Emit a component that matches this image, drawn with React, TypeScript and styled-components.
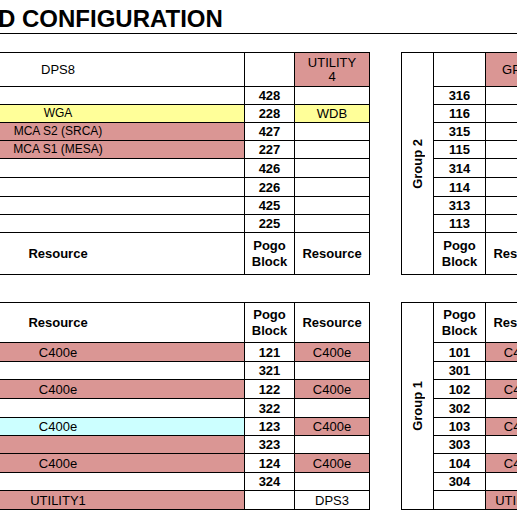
import React from "react";
import styled, { createGlobalStyle } from "styled-components";

type Fill = "pink" | "yellow" | "cyan";
const fills: Record<Fill, string> = {
  pink: "#da9694",
  yellow: "#ffff99",
  cyan: "#ccffff",
};

const Global = createGlobalStyle`
  html, body { margin: 0; padding: 0; background: #fff; overflow: hidden; }
  body { font-family: "Liberation Sans", Arial, sans-serif; color: #000; }
`;

const Page = styled.div`
  width: 517px;
  height: 517px;
  overflow: hidden;
`;

const Title = styled.h1`
  margin: 0;
  height: 34px;
  box-sizing: border-box;
  padding-top: 5px;
  font-size: 24px;
  line-height: 28px;
  font-weight: 700;
  border-bottom: 1px solid #000;
  white-space: nowrap;
  text-indent: -2px;
`;

const Board = styled.div`
  display: grid;
  grid-template-columns: 370px 370px;
  column-gap: 31px;
  row-gap: 27px;
  margin-top: 18px;
  width: max-content;
`;

const Sheet = styled.div<{ $cols: string; $rows: string; $edge?: boolean }>`
  display: grid;
  grid-template-columns: ${(p) => p.$cols};
  grid-template-rows: ${(p) => p.$rows};
  border-top: 1px solid #000;
  border-left: ${(p) => (p.$edge ? "1px solid #000" : "none")};
  width: max-content;
`;

const Cell = styled.div<{
  $fill?: Fill;
  $bold?: boolean;
  $small?: boolean;
  $wide?: boolean;
}>`
  box-sizing: border-box;
  border-right: 1px solid #000;
  border-bottom: 1px solid #000;
  background: ${(p) => (p.$fill ? fills[p.$fill] : "#fff")};
  display: flex;
  align-items: center;
  justify-content: center;
  text-align: center;
  font-size: ${(p) => (p.$small ? 12 : 13)}px;
  font-weight: ${(p) => (p.$bold ? 700 : 400)};
  line-height: 15px;
  white-space: nowrap;
  padding-right: ${(p) => (p.$wide ? 128 : 0)}px;
  overflow: hidden;
`;

const Stack = styled.span<{ $lh: number }>`
  display: block;
  line-height: ${(p) => p.$lh}px;
`;

const GroupCell = styled.div`
  grid-row: 1 / -1;
  box-sizing: border-box;
  border-right: 1px solid #000;
  border-bottom: 1px solid #000;
  display: flex;
  align-items: center;
  justify-content: center;
`;

const GroupText = styled.span`
  writing-mode: vertical-rl;
  transform: rotate(180deg);
  font-size: 13px;
  font-weight: 700;
  white-space: nowrap;
`;

type Res = { text?: string; fill?: Fill; small?: boolean };
type Row = { left?: Res; pogo?: string; right?: Res };

const TOP_ROWS = "34px 18px 18px 18px 18px 19px 19px 18px 18px 42px";
const BOTTOM_ROWS = "40px 19px 18px 19px 19px 18px 18px 19px 18px 19px";
const LEFT_COLS = "245px 50px 75px";
const RIGHT_COLS = "32px 52px 75px";

const topLeft: Row[] = [
  { pogo: "428" },
  { left: { text: "WGA", fill: "yellow", small: true }, pogo: "228", right: { text: "WDB", fill: "yellow" } },
  { left: { text: "MCA S2 (SRCA)", fill: "pink", small: true }, pogo: "427" },
  { left: { text: "MCA S1 (MESA)", fill: "pink", small: true }, pogo: "227" },
  { pogo: "426" },
  { pogo: "226" },
  { pogo: "425" },
  { pogo: "225" },
];

const c400: Res = { text: "C400e", fill: "pink" };

const bottomLeft: Row[] = [
  { left: c400, pogo: "121", right: c400 },
  { pogo: "321" },
  { left: c400, pogo: "122", right: c400 },
  { pogo: "322" },
  { left: { text: "C400e", fill: "cyan" }, pogo: "123", right: c400 },
  { left: { fill: "pink" }, pogo: "323" },
  { left: c400, pogo: "124", right: c400 },
  { pogo: "324" },
  { left: { text: "UTILITY1", fill: "pink" }, pogo: "", right: { text: "DPS3" } },
];

const group2: Row[] = ["316", "116", "315", "115", "314", "114", "313", "113"].map((n) => ({ pogo: n }));

const group1: Row[] = [
  { pogo: "101", right: c400 },
  { pogo: "301" },
  { pogo: "102", right: c400 },
  { pogo: "302" },
  { pogo: "103", right: c400 },
  { pogo: "303" },
  { pogo: "104", right: c400 },
  { pogo: "304" },
  { pogo: "", right: { text: "UTILITY2", fill: "pink" } },
];

const PogoBlock = () => (
  <Cell $bold>
    <Stack $lh={16}>
      Pogo
      <br />
      Block
    </Stack>
  </Cell>
);

const ResCell = ({ r, wide }: { r?: Res; wide?: boolean }) => (
  <Cell $fill={r?.fill} $small={r?.small} $wide={wide}>
    {r?.text ?? ""}
  </Cell>
);

const DataRows = ({ rows, withLeft }: { rows: Row[]; withLeft: boolean }) => (
  <>
    {rows.map((row, i) => (
      <React.Fragment key={i}>
        {withLeft && <ResCell r={row.left} wide />}
        <Cell $bold>{row.pogo}</Cell>
        <ResCell r={row.right} />
      </React.Fragment>
    ))}
  </>
);

export default function App() {
  return (
    <Page>
      <Global />
      <Title>D CONFIGURATION</Title>
      <Board>
        <Sheet $cols={LEFT_COLS} $rows={TOP_ROWS}>
          <Cell $wide>DPS8</Cell>
          <Cell />
          <Cell $fill="pink">
            <Stack $lh={14}>
              UTILITY
              <br />4
            </Stack>
          </Cell>
          <DataRows rows={topLeft} withLeft />
          <Cell $bold $wide>Resource</Cell>
          <PogoBlock />
          <Cell $bold>Resource</Cell>
        </Sheet>

        <Sheet $cols={RIGHT_COLS} $rows={TOP_ROWS} $edge>
          <GroupCell>
            <GroupText>Group 2</GroupText>
          </GroupCell>
          <Cell />
          <Cell $fill="pink">GPIB 2</Cell>
          <DataRows rows={group2} withLeft={false} />
          <PogoBlock />
          <Cell $bold>Resource</Cell>
        </Sheet>

        <Sheet $cols={LEFT_COLS} $rows={BOTTOM_ROWS}>
          <Cell $bold $wide>Resource</Cell>
          <PogoBlock />
          <Cell $bold>Resource</Cell>
          <DataRows rows={bottomLeft} withLeft />
        </Sheet>

        <Sheet $cols={RIGHT_COLS} $rows={BOTTOM_ROWS} $edge>
          <GroupCell>
            <GroupText>Group 1</GroupText>
          </GroupCell>
          <PogoBlock />
          <Cell $bold>Resource</Cell>
          <DataRows rows={group1} withLeft={false} />
        </Sheet>
      </Board>
    </Page>
  );
}
